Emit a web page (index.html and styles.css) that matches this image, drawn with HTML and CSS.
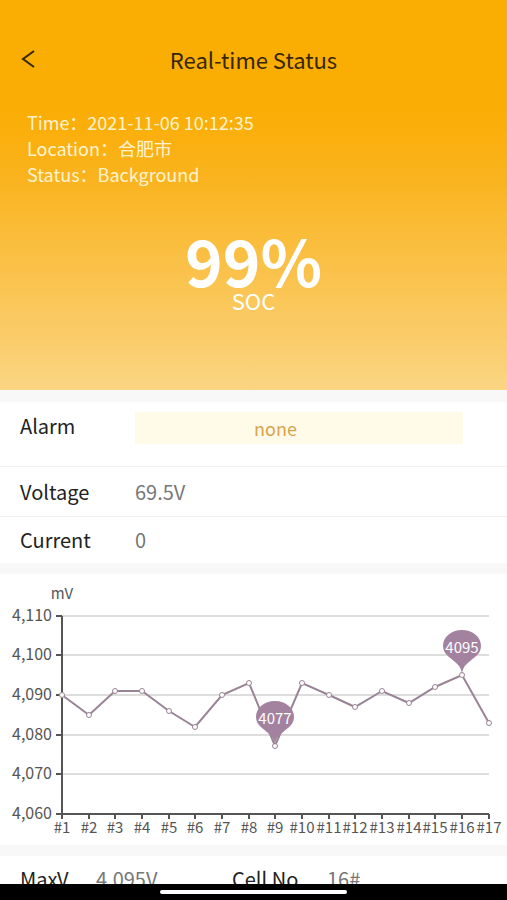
FILE: index.html
```html
<!DOCTYPE html>
<html lang="en">
<head>
<meta charset="utf-8">
<meta name="viewport" content="width=device-width, initial-scale=1">
<title>Real-time Status</title>
<link rel="stylesheet" href="styles.css">
</head>
<body>
<header class="hero">
  <div class="nav">
    <button class="back" type="button" aria-label="Back">
      <svg width="16" height="20" viewBox="0 0 16 20"><path d="M13 2 L2 10 L13 18" fill="none" stroke="#35260a" stroke-width="2"/></svg>
    </button>
    <h1 class="title">Real-time Status</h1>
  </div>
  <div class="info">
    <p>Time：2021-11-06 10:12:35</p>
    <p>Location：<span lang="zh">合肥市</span></p>
    <p>Status：Background</p>
  </div>
  <div class="soc">
    <strong class="soc-value">99%</strong>
    <span class="soc-label">SOC</span>
  </div>
</header>
<main>
  <dl class="card">
    <div class="row row-alarm"><dt>Alarm</dt><dd class="alarm">none</dd></div>
    <div class="row"><dt>Voltage</dt><dd>69.5V</dd></div>
    <div class="row"><dt>Current</dt><dd>0</dd></div>
  </dl>
  <section class="card">
    <svg class="chart" viewBox="0 0 507 271" role="img" aria-label="Cell voltage, mV">
      <path class="grid" d="M62 42H489M62 81H489M62 121H489M62 161H489M62 200H489"/>
      <path class="axis" d="M62 42V240H489M56 42H62M56 81H62M56 121H62M56 161H62M56 200H62M56 240H62M62 240v5M89 240v5M115 240v5M142 240v5M169 240v5M195 240v5M222 240v5M249 240v5M275 240v5M302 240v5M329 240v5M355 240v5M382 240v5M409 240v5M435 240v5M462 240v5M489 240v5"/>
      <text class="unit" x="62" y="25">mV</text>
      <g class="y-labels">
        <text x="52" y="47">4,110</text>
        <text x="52" y="86">4,100</text>
        <text x="52" y="126">4,090</text>
        <text x="52" y="166">4,080</text>
        <text x="52" y="205">4,070</text>
        <text x="52" y="245">4,060</text>
      </g>
      <g class="x-labels">
        <text x="62" y="259">#1</text><text x="89" y="259">#2</text><text x="115" y="259">#3</text><text x="142" y="259">#4</text><text x="169" y="259">#5</text><text x="195" y="259">#6</text><text x="222" y="259">#7</text><text x="249" y="259">#8</text><text x="275" y="259">#9</text><text x="302" y="259">#10</text><text x="329" y="259">#11</text><text x="355" y="259">#12</text><text x="382" y="259">#13</text><text x="409" y="259">#14</text><text x="435" y="259">#15</text><text x="462" y="259">#16</text><text x="489" y="259">#17</text>
      </g>
      <polyline class="line" points="62,121 89,141 115,117 142,117 169,137 195,153 222,121 249,109 275,172 302,109 329,121 355,133 382,117 409,129 435,113 462,101 489,149"/>
      <g class="dots">
        <circle cx="62" cy="121" r="2.5"/><circle cx="89" cy="141" r="2.5"/><circle cx="115" cy="117" r="2.5"/><circle cx="142" cy="117" r="2.5"/><circle cx="169" cy="137" r="2.5"/><circle cx="195" cy="153" r="2.5"/><circle cx="222" cy="121" r="2.5"/><circle cx="249" cy="109" r="2.5"/><circle cx="275" cy="172" r="2.5"/><circle cx="302" cy="109" r="2.5"/><circle cx="329" cy="121" r="2.5"/><circle cx="355" cy="133" r="2.5"/><circle cx="382" cy="117" r="2.5"/><circle cx="409" cy="129" r="2.5"/><circle cx="435" cy="113" r="2.5"/><circle cx="462" cy="101" r="2.5"/><circle cx="489" cy="149" r="2.5"/>
      </g>
      <g class="pins">
        <path d="M275 171C274 162 269 160 262 154C258 151 256 147 256 143C256 134 264 127 275 127S294 134 294 143C294 147 292 151 288 154C281 160 276 162 275 171Z"/>
        <text x="275" y="150">4077</text>
        <path d="M462 100C461 91 456 89 449 83C445 80 443 76 443 72C443 63 451 56 462 56S481 63 481 72C481 76 479 80 475 83C468 89 463 91 462 100Z"/>
        <text x="462" y="79">4095</text>
      </g>
    </svg>
  </section>
  <dl class="card pair">
    <div class="cell"><dt>MaxV</dt><dd>4.095V</dd></div>
    <div class="cell"><dt>Cell No</dt><dd>16#</dd></div>
  </dl>
</main>
<div class="home-bar"><span class="home-pill"></span></div>
</body>
</html>
```
FILE: styles.css
```css
* { box-sizing: border-box; }
body {
  margin: 0;
  height: 100vh;
  overflow: hidden;
  background: #f8f8f8;
  color: #222;
  font-family: "Noto Sans CJK SC", "Noto Sans", sans-serif;
  font-size: 20px;
  line-height: 28px;
}
h1, p, dl, dd { margin: 0; }
.hero {
  padding: 39px 0 82px;
  background: linear-gradient(#faad02 0%, #faad04 28%, #fab31d 45%, #fabf42 65%, #fad583 100%);
}
.nav {
  display: grid;
  grid-template-columns: 60px 1fr 60px;
  align-items: center;
  height: 40px;
}
.back {
  display: flex;
  width: 60px;
  padding: 0 0 0 21px;
  border: 0;
  background: none;
}
.title {
  color: #35260a;
  font-size: 22px;
  font-weight: 400;
  line-height: 26px;
  text-align: center;
}
.info {
  padding: 30px 27px 0;
  color: #fff3cf;
  font-size: 18px;
  line-height: 26px;
}
.soc {
  display: flex;
  flex-direction: column;
  align-items: center;
  padding-top: 39px;
  color: #fff;
}
.soc-value {
  font-size: 64px;
  font-weight: 700;
  line-height: 66px;
}
.soc-label {
  font-size: 22px;
  line-height: 16px;
}
.card {
  margin-bottom: 11px;
  background: #fff;
}
.hero + main { padding-top: 12px; }
.row {
  display: flex;
  align-items: center;
  height: 50px;
  padding: 0 44px 0 20px;
  border-bottom: 1px solid #f2f2f2;
}
.row dt { width: 115px; }
.row dd { color: #777; }
.row:last-child {
  height: 46px;
  border-bottom: 0;
}
.row-alarm {
  align-items: flex-start;
  height: 65px;
  padding-top: 10px;
}
.row .alarm {
  flex: 1;
  height: 32px;
  background: #fffbe8;
  color: #d9a34c;
  font-size: 18px;
  line-height: 32px;
  text-align: center;
}
.row-alarm .alarm { padding-right: 47px; }
.chart {
  display: block;
  width: 100%;
}
.chart text {
  fill: #555;
  font-size: 15px;
  text-anchor: middle;
}
.chart .y-labels text {
  font-size: 16px;
  text-anchor: end;
}
.chart .pins text { fill: #fff; }
.grid { stroke: #ddd; stroke-width: 2; }
.axis { fill: none; stroke: #555; stroke-width: 2; }
.line { fill: none; stroke: #998394; stroke-width: 2; }
.dots circle { fill: #fff; stroke: #998394; }
.pins path { fill: #a3829f; }
.pair {
  display: grid;
  grid-template-columns: 212px 1fr;
  padding: 9px 20px;
}
.cell { display: flex; }
.cell dt { width: 76px; }
.cell + .cell dt { width: 95px; }
.cell dd { color: #777; }
.home-bar {
  position: fixed;
  right: 0;
  bottom: 0;
  left: 0;
  display: flex;
  justify-content: center;
  height: 16px;
  padding-top: 6px;
  background: #000;
}
.home-pill {
  width: 37%;
  height: 4px;
  border-radius: 2px;
  background: #fff;
}
```
